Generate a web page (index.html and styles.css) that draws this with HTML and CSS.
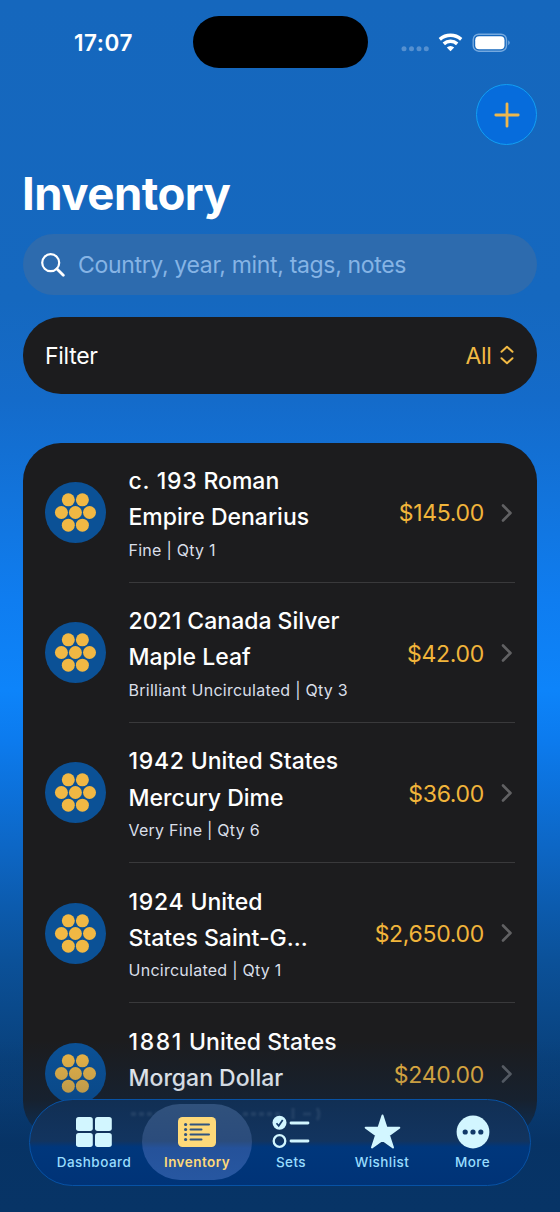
FILE: index.html
```html
<!DOCTYPE html>
<html lang="en">
<head>
<meta charset="utf-8">
<title>Inventory</title>
<link rel="stylesheet" href="styles.css">
</head>
<body>
<svg class="defs" width="0" height="0" aria-hidden="true">
  <symbol id="coins" viewBox="0 0 61 61">
    <circle cx="23.3" cy="17.8" r="6.5"/><circle cx="37.4" cy="17.8" r="6.5"/>
    <circle cx="16.4" cy="30.5" r="6.5"/><circle cx="30.4" cy="30.5" r="6.5"/><circle cx="44.5" cy="30.5" r="6.5"/>
    <circle cx="23.3" cy="43.2" r="6.5"/><circle cx="37.4" cy="43.2" r="6.5"/>
  </symbol>
  <symbol id="chevron" viewBox="0 0 12 18"><path d="M2 1.5 9.5 9 2 16.5"/></symbol>
</svg>
<div class="screen">
  <header class="status">
    <span class="clock">17:07</span>
    <span class="island"></span>
    <svg class="signals" width="112" height="22" viewBox="0 0 112 22">
      <g fill="#5590d0"><circle cx="5" cy="16.800" r="2.500"/><circle cx="12.500" cy="16.800" r="2.500"/><circle cx="20" cy="16.800" r="2.500"/><circle cx="27.300" cy="16.800" r="2.500"/></g>
      <g transform="translate(.5 .6)"><g fill="none" stroke="#fff" stroke-width="3.500"><path d="M40.300 6.700a16.500 16.500 0 0 1 21.400 0"/><path d="M44.300 11.300a10 10 0 0 1 13.400 0"/></g>
      <path fill="#fff" d="m51 18.600-3.700-3.800a5.300 5.300 0 0 1 7.400 0z"/></g>
      <rect x="74.200" y="2.200" width="33.300" height="17" rx="5.500" fill="none" stroke="#75a9df" stroke-width="1.400"/>
      <rect x="76.200" y="4.200" width="29.300" height="13" rx="4" fill="#fff"/>
      <path d="M109.200 8.300q3.200 2.500 0 5z" fill="#75a9df"/>
    </svg>
  </header>
  <div class="toolbar">
    <button class="add" aria-label="Add"><svg width="26" height="26" viewBox="0 0 26 26"><path d="M13 1.800v22.400M1.800 13h22.400"/></svg></button>
  </div>
  <h1 class="title">Inventory</h1>
  <div class="search">
    <svg width="24" height="24" viewBox="0 0 24 24"><circle cx="9.700" cy="9.700" r="8.500"/><path d="m16 16 6.300 6.300" stroke-width="2.800"/></svg>
    <span>Country, year, mint, tags, notes</span>
  </div>
  <div class="filter">
    <span>Filter</span>
    <span class="choice">All<svg width="14" height="20" viewBox="0 0 14 20"><path d="m1.500 6.800 5.500-5 5.500 5M1.500 13.200l5.500 5 5.500-5"/></svg></span>
  </div>
  <main class="list">
    <article class="item">
      <svg class="coin"><use href="#coins"/></svg>
      <div class="row">
        <div class="info"><h2><span class="year">c. 193</span> Roman<br>Empire Denarius</h2><p>Fine | Qty 1</p></div>
        <span class="price">$145.00</span><svg class="chevron"><use href="#chevron"/></svg>
      </div>
    </article>
    <article class="item">
      <svg class="coin"><use href="#coins"/></svg>
      <div class="row">
        <div class="info"><h2>2021 Canada Silver<br>Maple Leaf</h2><p>Brilliant Uncirculated | Qty 3</p></div>
        <span class="price">$42.00</span><svg class="chevron"><use href="#chevron"/></svg>
      </div>
    </article>
    <article class="item">
      <svg class="coin"><use href="#coins"/></svg>
      <div class="row">
        <div class="info"><h2><span class="year">1942</span> United States<br>Mercury Dime</h2><p>Very Fine | Qty 6</p></div>
        <span class="price">$36.00</span><svg class="chevron"><use href="#chevron"/></svg>
      </div>
    </article>
    <article class="item">
      <svg class="coin"><use href="#coins"/></svg>
      <div class="row">
        <div class="info"><h2><span class="year">1924</span> United<br>States Saint-G...</h2><p>Uncirculated | Qty 1</p></div>
        <span class="price">$2,650.00</span><svg class="chevron"><use href="#chevron"/></svg>
      </div>
    </article>
    <article class="item">
      <svg class="coin"><use href="#coins"/></svg>
      <div class="row">
        <div class="info"><h2><span class="year wide">1881</span> United States<br>Morgan Dollar</h2></div>
        <span class="price">$240.00</span><svg class="chevron"><use href="#chevron"/></svg>
      </div>
    </article>
  </main>
  <div class="fade"></div>
  <nav class="tabs">
    <svg class="glass" width="210" height="18" viewBox="0 0 210 18"><path d="M4 9h28M116 9h40" stroke-width="4" stroke-dasharray="5 3"/><path d="M166 3v11M176 9h8M190 3q4 6 0 12" stroke-width="3"/></svg>
    <a class="tab dashboard"><svg width="36" height="30" viewBox="0 0 36 30"><g fill="currentColor"><rect x="0" y="0" width="16.800" height="14" rx="2.700"/><rect x="19" y="0" width="16.800" height="14" rx="2.700"/><rect x="0" y="16" width="16.800" height="14" rx="2.700"/><rect x="19" y="16" width="16.800" height="14" rx="2.700"/></g></svg><span>Dashboard</span></a>
    <a class="tab active"><svg width="38" height="30" viewBox="0 0 38 30"><rect width="38" height="30" rx="4.500" fill="currentColor"/><g stroke="#31547f" stroke-width="2" stroke-linecap="round"><path d="M12.500 7.500h18.500M12.500 12.500h11M12.500 17.500h18.500M12.500 22.500h11"/></g><g fill="#31547f"><circle cx="7.600" cy="7.500" r="1.600"/><circle cx="7.600" cy="12.500" r="1.600"/><circle cx="7.600" cy="17.500" r="1.600"/><circle cx="7.600" cy="22.500" r="1.600"/></g></svg><span>Inventory</span></a>
    <a class="tab sets"><svg width="38" height="34" viewBox="0 0 38 34"><circle cx="7.500" cy="7.800" r="7" fill="currentColor"/><path d="m4.500 8.300 2.200 2.500 4-5.800" fill="none" stroke="#153a69" stroke-width="1.700"/><circle cx="7.500" cy="26" r="5.800" fill="none" stroke="currentColor" stroke-width="2.300"/><path d="M19 8h17M19 26h17" stroke="currentColor" stroke-width="2.800" stroke-linecap="round"/></svg><span>Sets</span></a>
    <a class="tab wish"><svg width="37" height="36" viewBox="0 0 37 36"><path d="M18.500 1.500 22.500 13.700H35.300L25 21.200 29 33.500 18.500 26 8 33.500 12 21.200 1.700 13.700H14.500Z" fill="currentColor" stroke="currentColor" stroke-width="2" stroke-linejoin="round"/></svg><span>Wishlist</span></a>
    <a class="tab more"><svg width="34" height="34" viewBox="0 0 34 34"><circle cx="17" cy="17" r="16.400" fill="currentColor"/><g fill="#113969"><circle cx="9.200" cy="17" r="2.600"/><circle cx="17" cy="17" r="2.600"/><circle cx="24.800" cy="17" r="2.600"/></g></svg><span>More</span></a>
  </nav>
</div>
</body>
</html>
```
FILE: styles.css
```css
* { box-sizing: border-box; }
body { margin: 0; font-family: Inter, Roboto, sans-serif; color: #fff; }
h1, h2, p { margin: 0; }
.defs { position: absolute; }
.screen {
  position: relative;
  height: 1212px;
  padding: 0 23px;
  overflow: hidden;
  background: linear-gradient(#1567bd 0, #1568bf 300px, #146bca 400px, #1274dc 500px, #0f7df0 600px, #0d84fa 690px, #0c7bee 740px, #0d66c4 850px, #0b5199 960px, #09417c 1060px, #083568 1212px);
}
.status { height: 84px; padding: 16px 5px 0 51px; display: flex; align-items: flex-start; }
.clock { width: 119px; padding-top: 12px; font-size: 22.500px; line-height: 30px; font-weight: 600; letter-spacing: .55px; }
.island { width: 175px; height: 52px; border-radius: 26px; background: #000; }
.signals { margin: 16px 0 0 31px; flex: none; }
.toolbar { display: flex; justify-content: flex-end; }
.add { width: 61px; height: 61px; padding: 0; display: grid; place-items: center; border: 1.500px solid #129ff3; border-radius: 50%; background: #066cdc; }
.add path { fill: none; stroke: #edb74c; stroke-width: 2.800; stroke-linecap: round; }
.title { height: 89px; padding-top: 21px; margin-left: -1px; font-size: 45.500px; line-height: 56px; font-weight: 700; letter-spacing: -.5px; }
.search { height: 61px; padding-left: 18px; display: flex; align-items: center; gap: 13px; border-radius: 31px; background: #2d6bae; color: #86b4e5; font-size: 23px; letter-spacing: -.33px; }
.search svg { fill: none; stroke: #fff; stroke-width: 2.200; stroke-linecap: round; }
.filter { height: 77px; margin-top: 21.500px; padding: 1px 23.500px 0 22px; display: flex; align-items: center; justify-content: space-between; border-radius: 38px; background: #1c1c1e; font-size: 23px; letter-spacing: -.3px; }
.choice { display: flex; align-items: center; gap: 8px; color: #f1b944; }
.choice svg { margin-top: -2px; fill: none; stroke: currentColor; stroke-width: 2; stroke-linecap: round; stroke-linejoin: round; }
.list { height: 696px; margin-top: 49.500px; padding: 0 22px; overflow: hidden; border-radius: 38px; background: #1c1c1e; }
.item { height: 140.200px; display: flex; align-items: center; gap: 22.500px; }
.coin { width: 61px; height: 61px; margin-top: -1px; flex: none; border-radius: 50%; background: #0b5196; fill: #f1b844; }
.row { height: 139.700px; margin-top: -.5px; flex: 1; display: flex; align-items: center; border-bottom: 1.500px solid #39393b; }
.item:last-child .row { border: 0; }
.info { flex: 1; align-self: flex-start; padding-top: 20px; white-space: nowrap; }
.info h2 { font-size: 23px; line-height: 36.300px; font-weight: 500; }
.year { letter-spacing: .7px; }
.year.wide { letter-spacing: 1.600px; }
.info p { margin-top: 2px; font-size: 16px; line-height: 24px; letter-spacing: .26px; color: #d9dfe9; }
.price { padding-top: 2px; color: #f1b53b; font-size: 23px; letter-spacing: -.3px; }
.chevron { width: 12px; height: 18px; margin: 1px 2px 0 17px; fill: none; stroke: #616163; stroke-width: 2.600; stroke-linecap: round; stroke-linejoin: round; }
.fade { position: absolute; inset: 1040px 0 0; background: linear-gradient(rgba(7,49,98,0), rgba(7,49,98,.25) 60px, rgba(7,51,101,.7) 90px, rgba(7,51,101,.97) 104px, #073466); }
.tabs { position: absolute; left: 29px; top: 1099px; width: 502px; height: 87px; display: flex; align-items: flex-start; padding: 4px 11px; border: 1.500px solid #0752a5; border-radius: 44px; background: linear-gradient(#112f54 0, #12345f 41px, #00377c 47px, #003377 100%); color: #d2f6ff; }
.glass { position: absolute; left: 97px; top: 5px; fill: none; stroke: #395577; opacity: .45; filter: blur(1px); }
.tab { position: relative; height: 76px; padding-top: 6px; display: grid; grid-template-rows: 44px 16px; align-content: start; justify-items: center; align-items: center; font-size: 13.500px; font-weight: 500; letter-spacing: .45px; }
.tab span { color: #98ddff; }
.dashboard { width: 106px; margin-right: -5px; }
.active { width: 110px; border-radius: 38px; background: linear-gradient(#30517c, #2b4c7c 37px, #25529a 44px, #2757a1); color: #fed979; }
.tab.active span { color: #fed979; font-weight: 600; }
.sets { width: 78px; }
.wish { width: 104px; }
.more { width: 77px; }
```
